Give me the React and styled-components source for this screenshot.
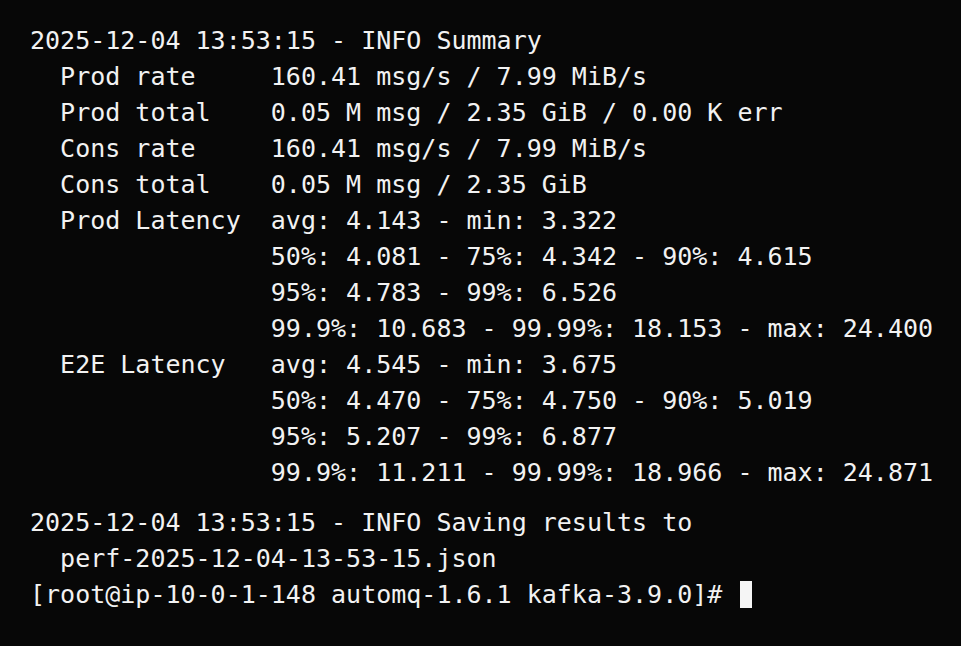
import React from 'react';
import styled, { createGlobalStyle } from 'styled-components';

const Global = createGlobalStyle`
  html, body {
    margin: 0;
    padding: 0;
    background: #070707;
  }
`;

const Terminal = styled.div`
  width: 961px;
  height: 646px;
  box-sizing: border-box;
  padding: 23px 0 0 30px;
  background: #070707;
  color: #f2f2f2;
  font-family: "DejaVu Sans Mono", "Liberation Mono", monospace;
  font-size: 25px;
  line-height: 36px;
  overflow: hidden;
`;

const Block = styled.div`
  margin-top: ${(p) => p.gap || 0}px;
`;

const Line = styled.div`
  white-space: pre;
  height: 36px;
`;

const Cursor = styled.span`
  display: inline-block;
  width: 12px;
  height: 27px;
  margin-left: 18px;
  vertical-align: -5px;
  background: #f5f5f5;
`;

const summary = [
  '2025-12-04 13:53:15 - INFO Summary',
  '  Prod rate     160.41 msg/s / 7.99 MiB/s',
  '  Prod total    0.05 M msg / 2.35 GiB / 0.00 K err',
  '  Cons rate     160.41 msg/s / 7.99 MiB/s',
  '  Cons total    0.05 M msg / 2.35 GiB',
  '  Prod Latency  avg: 4.143 - min: 3.322',
  '                50%: 4.081 - 75%: 4.342 - 90%: 4.615',
  '                95%: 4.783 - 99%: 6.526',
  '                99.9%: 10.683 - 99.99%: 18.153 - max: 24.400',
  '  E2E Latency   avg: 4.545 - min: 3.675',
  '                50%: 4.470 - 75%: 4.750 - 90%: 5.019',
  '                95%: 5.207 - 99%: 6.877',
  '                99.9%: 11.211 - 99.99%: 18.966 - max: 24.871',
];

const saving = [
  '2025-12-04 13:53:15 - INFO Saving results to',
  '  perf-2025-12-04-13-53-15.json',
];

export default function App() {
  return (
    <>
      <Global />
      <Terminal>
        <Block>
          {summary.map((l, i) => (
            <Line key={i}>{l}</Line>
          ))}
        </Block>
        <Block gap={14}>
          {saving.map((l, i) => (
            <Line key={i}>{l}</Line>
          ))}
          <Line>
            {'[root@ip-10-0-1-148 automq-1.6.1 kafka-3.9.0]#'}
            <Cursor />
          </Line>
        </Block>
      </Terminal>
    </>
  );
}
